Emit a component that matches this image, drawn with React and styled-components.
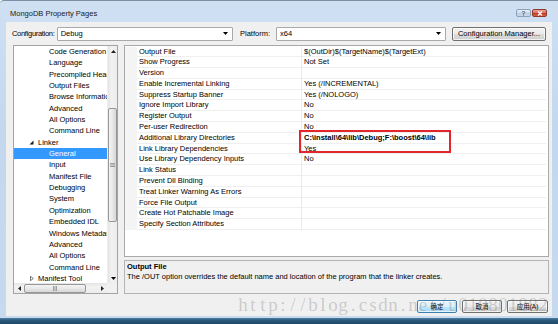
import React from 'react';
import styled, { createGlobalStyle } from 'styled-components';

const UI = `"Liberation Sans", Arial, sans-serif`;
const CJK = `"Liberation Sans", "Noto Sans CJK SC", sans-serif`;

const Global = createGlobalStyle`
  html, body { margin: 0; padding: 0; background: #ffffff; }
  body { font-family: ${UI}; }
  #root { width: 558px; height: 324px; }
  * { box-sizing: border-box; }
`;

const Window = styled.div`
  position: relative;
  width: 558px;
  height: 324px;
  overflow: hidden;
  display: flex;
  flex-direction: column;
  background: linear-gradient(180deg, #cfe0f3 0%, #c3d7ee 40%, #c6d9ef 100%);
  border-top: 1px solid #7d8fa6;
  border-top-left-radius: 4px;
  font-family: ${UI};
  font-size: 7.5px;
  color: #000;
`;

const TitleBar = styled.div`
  height: 21px;
  display: flex;
  align-items: flex-start;
  padding: 0 11px 0 10px;
`;

const Title = styled.div`
  margin-top: 8px;
  line-height: 9px;
  font-size: 7.5px;
  color: #1b1b1b;
`;

const Caption = styled.div`
  margin-left: auto;
  margin-top: 8px;
  display: flex;
  gap: 1px;
`;

const CaptionButton = styled.div`
  width: 15px;
  height: 8px;
  border: 1px solid ${p => (p.$close ? '#8f3a2c' : '#8aa0bb')};
  border-radius: 2px;
  display: flex;
  align-items: center;
  justify-content: center;
  background: ${p =>
    p.$close
      ? 'linear-gradient(180deg, #eaa89b 0%, #d6705e 45%, #c13a25 55%, #d4634b 100%)'
      : 'linear-gradient(180deg, #e6eef8 0%, #d1deee 45%, #bccde3 55%, #c9d8ea 100%)'};
`;

const Client = styled.div`
  flex: 1;
  margin: 0 6px;
  background: #f0f0f0;
  display: flex;
  flex-direction: column;
  padding: 4px 3px 3px 6px;
`;

const ConfigRow = styled.div`
  height: 15px;
  display: flex;
  align-items: center;
`;

const Label = styled.div`
  width: ${p => p.$w}px;
  margin-left: ${p => p.$ml || 0}px;
  white-space: nowrap;
  letter-spacing: ${p => p.$ls || 0}px;
  line-height: 14px;
`;

const Select = styled.div`
  width: ${p => p.$w}px;
  height: 14px;
  background: #ffffff;
  border: 1px solid #a9a9a9;
  border-radius: 1px;
  display: flex;
  align-items: center;
  padding: 0 4px 0 3px;
  line-height: 12px;
`;

const SelectText = styled.span`
  flex: 1;
`;

const Button = styled.div`
  width: ${p => p.$w}px;
  height: ${p => p.$h}px;
  margin-left: ${p => p.$ml || 0}px;
  border: 1px solid ${p => (p.$focus ? '#3c7fb1' : '#707070')};
  border-radius: 2px;
  background: ${p =>
    p.$focus
      ? 'linear-gradient(180deg, #eaf6fd 0%, #d9f0fc 50%, #bee6fd 50%, #a7d9f5 100%)'
      : 'linear-gradient(180deg, #f2f2f2 0%, #ebebeb 50%, #dddddd 50%, #cfcfcf 100%)'};
  box-shadow: inset 0 0 0 1px rgba(255, 255, 255, 0.7);
  display: flex;
  align-items: center;
  justify-content: center;
  font-family: ${p => (p.$cjk ? CJK : UI)};
  font-size: ${p => (p.$cjk ? 6.5 : 7.5)}px;
  white-space: nowrap;
  line-height: 10px;
`;

const Main = styled.div`
  margin-top: 4px;
  height: 249px;
  display: flex;
  gap: 6px;
`;

const TreePanel = styled.div`
  margin-left: 1px;
  width: 105px;
  height: 249px;
  border: 1px solid #a3a3a3;
  background: #ffffff;
  display: grid;
  grid-template-columns: 93px 10px;
  grid-template-rows: 237px 10px;
`;

const TreeList = styled.div`
  overflow: hidden;
`;

const TreeRow = styled.div`
  height: 11.35px;
  line-height: 11.35px;
  display: flex;
  align-items: center;
  white-space: nowrap;
  padding-left: ${p => p.$indent}px;
  background: ${p => (p.$selected ? '#3399ff' : 'transparent')};
  color: ${p => (p.$selected ? '#ffffff' : '#000000')};
`;

const Expander = styled.svg`
  width: 5px;
  height: 5px;
  margin-right: 4px;
  flex: none;
`;

const VScroll = styled.div`
  display: flex;
  flex-direction: column;
  background: linear-gradient(90deg, #e4e4e4, #f2f2f2 40%, #ececec);
  border-left: 1px solid #eeeeee;
`;

const HScroll = styled.div`
  display: flex;
  align-items: center;
  background: linear-gradient(180deg, #e4e4e4, #f2f2f2 40%, #ececec);
`;

const ArrowCell = styled.div`
  width: 10px;
  height: 10px;
  flex: none;
  display: flex;
  align-items: center;
  justify-content: center;
`;

const Corner = styled.div`
  background: #f0f0f0;
`;

const VTrack = styled.div`
  flex: 1;
  display: flex;
  flex-direction: column;
  align-items: center;
`;

const VThumb = styled.div`
  margin-top: ${p => p.$offset}px;
  width: 9px;
  height: ${p => p.$size}px;
  border: 1px solid #979797;
  border-radius: 2px;
  background: linear-gradient(90deg, #f4f4f4 0%, #e8e8e8 50%, #d6d6d6 100%);
  display: flex;
  align-items: center;
  justify-content: center;
`;

const HThumb = styled.div`
  width: ${p => p.$size}px;
  height: 9px;
  border: 1px solid #979797;
  border-radius: 2px;
  background: linear-gradient(180deg, #f4f4f4 0%, #e8e8e8 50%, #d6d6d6 100%);
  display: flex;
  align-items: center;
  justify-content: center;
`;

const Spacer = styled.div`
  flex: 1;
`;

const RightColumn = styled.div`
  flex: 1;
  display: flex;
  flex-direction: column;
  gap: 3px;
`;

const GridPanel = styled.div`
  position: relative;
  height: 212px;
  border: 1px solid #a9a9a9;
  background: #ffffff;
  padding-top: 0.5px;
`;

const GridRow = styled.div`
  height: 10.8px;
  display: grid;
  grid-template-columns: 12px 165px 1fr;
  line-height: 10.8px;
`;

const Gutter = styled.div`
  background: #f4f4f4;
`;

const NameCell = styled.div`
  padding-left: 2px;
  border-right: 1px solid #ebebeb;
  border-bottom: 1px solid #efefef;
  white-space: nowrap;
  overflow: hidden;
  line-height: 10px;
`;

const ValueCell = styled.div`
  padding-left: 2px;
  border-bottom: 1px solid #efefef;
  white-space: nowrap;
  overflow: hidden;
  line-height: 10px;
  font-weight: ${p => (p.$bold ? 700 : 400)};
  margin-right: 2px;
`;

const Highlight = styled.div`
  position: absolute;
  left: 174px;
  top: 83.5px;
  width: 152px;
  height: 23px;
  border: 2.3px solid #e3262b;
  pointer-events: none;
`;

const DescPanel = styled.div`
  height: 34px;
  border: 1px solid #b4b4b4;
  background: #f0f0f0;
  padding: 1px 2px;
  line-height: 10px;
`;

const DescTitle = styled.div`
  font-weight: 700;
`;

const ButtonRow = styled.div`
  margin-top: 6px;
  height: 13px;
  display: flex;
  justify-content: flex-end;
  gap: 5px;
  padding-right: 1px;
`;

const FrameBottom = styled.div`
  height: 2px;
  background: #c7daef;
`;

const Taskbar = styled.div`
  height: 6px;
  background: linear-gradient(180deg, #4d7ea3 0%, #2a5878 40%, #1f4866 100%);
`;

const Watermark = styled.div`
  position: absolute;
  left: 238px;
  top: 294px;
  display: flex;
  font-family: "Liberation Serif", "DejaVu Serif", serif;
  font-size: 19px;
  line-height: 20px;
  color: rgba(110, 110, 110, 0.3);
  pointer-events: none;
`;

const WChar = styled.span`
  width: 10px;
  text-align: center;
  display: inline-block;
`;

const DownTri = () => (
  <svg width="5" height="3" viewBox="0 0 5 3">
    <path d="M0 0 L5 0 L2.5 3 Z" fill="#000" />
  </svg>
);

const UpTri = () => (
  <svg width="5" height="3" viewBox="0 0 5 3">
    <path d="M0 3 L5 3 L2.5 0 Z" fill="#222" />
  </svg>
);

const LeftTri = () => (
  <svg width="3" height="5" viewBox="0 0 3 5">
    <path d="M3 0 L3 5 L0 2.5 Z" fill="#222" />
  </svg>
);

const RightTri = () => (
  <svg width="3" height="5" viewBox="0 0 3 5">
    <path d="M0 0 L0 5 L3 2.5 Z" fill="#222" />
  </svg>
);

const VGrip = () => (
  <svg width="5" height="4" viewBox="0 0 5 4">
    <path d="M0 0.5 H5 M0 2 H5 M0 3.5 H5" stroke="#8a8a8a" strokeWidth="0.8" />
  </svg>
);

const HGrip = () => (
  <svg width="4" height="5" viewBox="0 0 4 5">
    <path d="M0.5 0 V5 M2 0 V5 M3.5 0 V5" stroke="#8a8a8a" strokeWidth="0.8" />
  </svg>
);

const treeItems = [
  { label: 'Code Generation' },
  { label: 'Language' },
  { label: 'Precompiled Headers' },
  { label: 'Output Files' },
  { label: 'Browse Information' },
  { label: 'Advanced' },
  { label: 'All Options' },
  { label: 'Command Line' },
  { label: 'Linker', expander: 'open' },
  { label: 'General', selected: true },
  { label: 'Input' },
  { label: 'Manifest File' },
  { label: 'Debugging' },
  { label: 'System' },
  { label: 'Optimization' },
  { label: 'Embedded IDL' },
  { label: 'Windows Metadata' },
  { label: 'Advanced' },
  { label: 'All Options' },
  { label: 'Command Line' },
  { label: 'Manifest Tool', expander: 'closed' },
];

const props = [
  ['Output File', '$(OutDir)$(TargetName)$(TargetExt)'],
  ['Show Progress', 'Not Set'],
  ['Version', ''],
  ['Enable Incremental Linking', 'Yes (/INCREMENTAL)'],
  ['Suppress Startup Banner', 'Yes (/NOLOGO)'],
  ['Ignore Import Library', 'No'],
  ['Register Output', 'No'],
  ['Per-user Redirection', 'No'],
  ['Additional Library Directories', 'C:\\install\\64\\lib\\Debug;F:\\boost\\64\\lib', true],
  ['Link Library Dependencies', 'Yes'],
  ['Use Library Dependency Inputs', 'No'],
  ['Link Status', ''],
  ['Prevent Dll Binding', ''],
  ['Treat Linker Warning As Errors', ''],
  ['Force File Output', ''],
  ['Create Hot Patchable Image', ''],
  ['Specify Section Attributes', ''],
];

const watermark = 'http://blog.csdn.net/u010801882';

function ExpanderIcon({ kind }) {
  if (kind === 'open') {
    return (
      <Expander viewBox="0 0 5 5">
        <path d="M4.5 0.5 L4.5 4.5 L0.5 4.5 Z" fill="#1e1e1e" />
      </Expander>
    );
  }
  return (
    <Expander viewBox="0 0 5 5">
      <path d="M1.5 0.3 L4.3 2.5 L1.5 4.7 Z" fill="none" stroke="#555" strokeWidth="0.8" />
    </Expander>
  );
}

export default function App() {
  return (
    <>
      <Global />
      <Window>
        <TitleBar>
          <Title>MongoDB Property Pages</Title>
          <Caption>
            <CaptionButton>
              <svg width="5" height="5" viewBox="0 0 5 5">
                <path d="M1.2 1.5 Q1.2 0.4 2.5 0.4 Q3.8 0.4 3.8 1.5 Q3.8 2.2 2.5 2.6 L2.5 3.3" fill="none" stroke="#3a4a60" strokeWidth="0.8" />
                <rect x="2.1" y="3.8" width="0.8" height="0.8" fill="#3a4a60" />
              </svg>
            </CaptionButton>
            <CaptionButton $close>
              <svg width="6" height="5" viewBox="0 0 6 5">
                <path d="M1 0.5 L5 4.5 M5 0.5 L1 4.5" stroke="#ffffff" strokeWidth="1.2" />
              </svg>
            </CaptionButton>
          </Caption>
        </TitleBar>
        <Client>
          <ConfigRow>
            <Label $w={44.7} $ls={-0.3}>Configuration:</Label>
            <Select $w={176.3}>
              <SelectText>Debug</SelectText>
              <DownTri />
            </Select>
            <Label $w={36} $ml={7}>Platform:</Label>
            <Select $w={170}>
              <SelectText>x64</SelectText>
              <DownTri />
            </Select>
            <Button $w={94} $h={14} $ml={6}>Configuration Manager...</Button>
          </ConfigRow>
          <Main>
            <TreePanel>
              <TreeList>
                {treeItems.map((it, i) => (
                  <TreeRow key={i} $indent={it.expander ? 15 : 35} $selected={it.selected}>
                    {it.expander && <ExpanderIcon kind={it.expander} />}
                    {it.label}
                  </TreeRow>
                ))}
              </TreeList>
              <VScroll>
                <ArrowCell><UpTri /></ArrowCell>
                <VTrack>
                  <VThumb $offset={52} $size={114}><VGrip /></VThumb>
                </VTrack>
                <ArrowCell><DownTri /></ArrowCell>
              </VScroll>
              <HScroll>
                <ArrowCell><LeftTri /></ArrowCell>
                <HThumb $size={62}><HGrip /></HThumb>
                <Spacer />
                <ArrowCell><RightTri /></ArrowCell>
              </HScroll>
              <Corner />
            </TreePanel>
            <RightColumn>
              <GridPanel>
                {props.map(([name, value, bold], i) => (
                  <GridRow key={i}>
                    <Gutter />
                    <NameCell>{name}</NameCell>
                    <ValueCell $bold={bold}>{value}</ValueCell>
                  </GridRow>
                ))}
                <Highlight />
              </GridPanel>
              <DescPanel>
                <DescTitle>Output File</DescTitle>
                <div>The /OUT option overrides the default name and location of the program that the linker creates.</div>
              </DescPanel>
            </RightColumn>
          </Main>
          <ButtonRow>
            <Button $w={40} $h={13} $focus $cjk>确定</Button>
            <Button $w={40} $h={13} $cjk>取消</Button>
            <Button $w={41} $h={13} $cjk>应用(A)</Button>
          </ButtonRow>
        </Client>
        <FrameBottom />
        <Taskbar />
        <Watermark>
          {watermark.split('').map((c, i) => (
            <WChar key={i}>{c}</WChar>
          ))}
        </Watermark>
      </Window>
    </>
  );
}
